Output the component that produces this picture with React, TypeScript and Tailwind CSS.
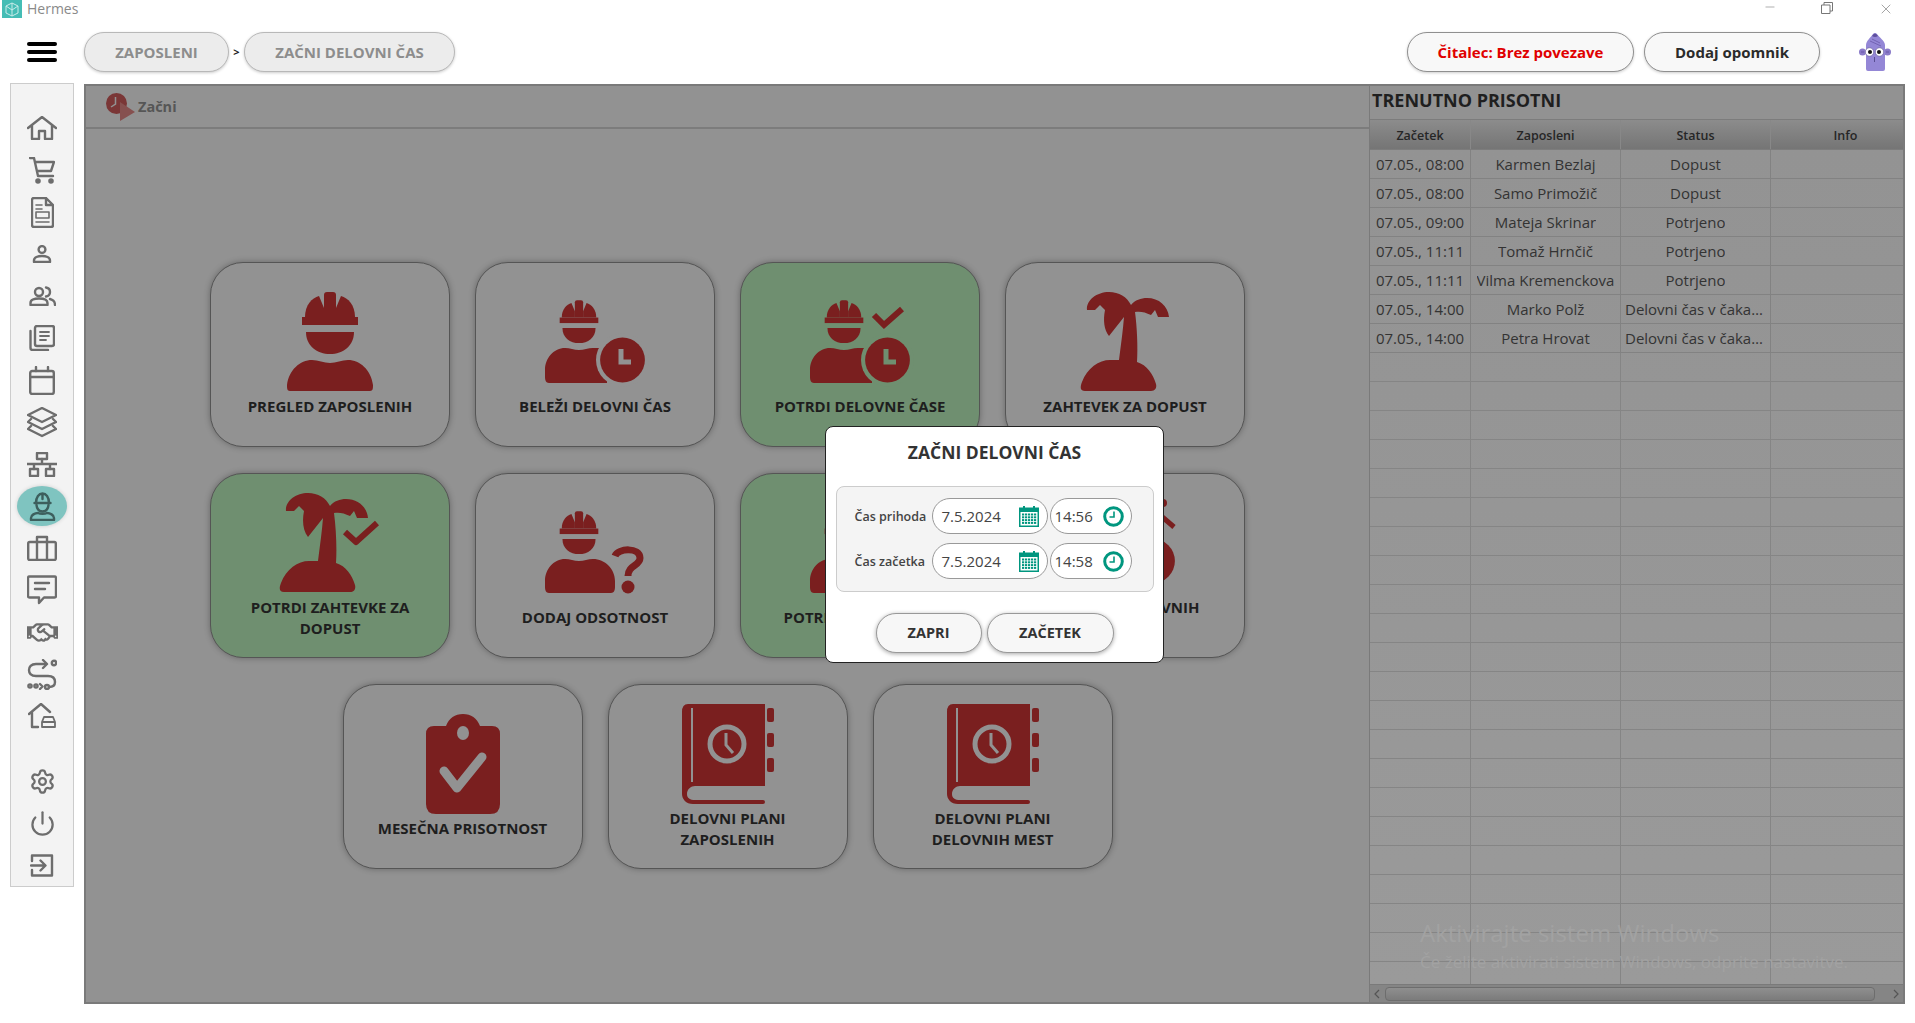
import { Settings, Power, Minus, X } from "lucide-react";
import { FaRegHandshake } from "react-icons/fa";
import type { ReactNode } from "react";

const RED = "#7a1f1f";
const GRAY_BG = "#929292";
const GREEN_BG = "#6f8f70";

// --- card icons ---
const Helmet = () => (
  <g fill={RED}>
    <rect x="22" y="25" width="56" height="8" />
    <path d="M25 25C25 13 32 6 39 4L44 16V25Z" />
    <path d="M44 25V3Q44 0 47 0H53Q56 0 56 3V25Z" />
    <path d="M75 25C75 13 68 6 61 4L56 16V25Z" />
    <path d="M26 40H74C74 54 63 62 50 62C37 62 26 54 26 40Z" />
  </g>
);

const WorkerIcon = () => (
  <svg viewBox="0 0 100 100" className="w-[100px] h-[100px]">
    <Helmet />
    <path fill={RED} d="M10 99C7 99 7 96 7 93C9 78 20 68 32 68C38 68 44 71 50 71C56 71 62 68 68 68C80 68 91 78 93 93C93 96 93 99 90 99Z" />
  </svg>
);

const SmallHead = () => (
  <g transform="translate(9.5 8.3) scale(0.69)">
    <Helmet />
  </g>
);

const ClockBadge = ({ bg }: { bg: string }) => (
  <g>
    <path fill={RED} d="M14 91C11 91 10 88 10 85V78C10 66 19 56 30 56C35 56 39 58 44 58C49 58 53 56 58 56H72V91Z" />
    <circle cx="87.5" cy="68" r="26.5" fill={bg} />
    <circle cx="87.5" cy="68" r="22.4" fill={RED} />
    <path d="M86 57V70H96" fill="none" stroke={bg} strokeWidth="5" />
  </g>
);

const PersonClock = ({ bg, mark }: { bg: string; mark?: "check" | "slash" }) => (
  <svg viewBox="0 0 120 100" className="w-[120px] h-[100px]">
    <SmallHead />
    <ClockBadge bg={bg} />
    {mark === "check" && <polyline points="74,23 84,33 102,17" fill="none" stroke={RED} strokeWidth="6" />}
    {mark === "slash" && (
      <g>
        <path d="M95 22L109 34" stroke={RED} strokeWidth="5" />
        <circle cx="98" cy="10" r="4" fill={RED} />
      </g>
    )}
  </svg>
);

const PersonQuestion = () => (
  <svg viewBox="0 0 120 100" className="w-[120px] h-[100px]">
    <SmallHead />
    <path fill={RED} d="M14 90C11 90 10 87 10 84V78C10 66 19 56 30 56C35 56 39 58 44 58C49 58 53 56 58 56C70 56 80 66 80 78V84C80 87 79 90 76 90Z" />
    <path d="M80 53C83 45 105 44 105 55C105 63 93 62 93 73" fill="none" stroke={RED} strokeWidth="7" />
    <circle cx="93" cy="84" r="6.5" fill={RED} />
  </svg>
);

const PalmPaths = () => (
  <path
    fill={RED}
    d="M12 18C11 8 22 0 34 0C44 0 52 5 56 13C60 8 66 6 72 6C84 6 93 14 94 25H83L80 18L76 23C70 20 65 19 60 20C62 35 63 55 62 70C72 73 78 82 81 92C82 96 80 99 76 99H10C5 99 5 95 7 90C12 76 24 68 35 68H44C46 52 48 38 49 25L34 44C29 38 28 28 30 18L25 13L20 18Z"
  />
);

const PalmIcon = () => (
  <svg viewBox="0 0 100 100" className="w-[100px] h-[100px]">
    <PalmPaths />
  </svg>
);

const PalmCheck = () => (
  <svg viewBox="0 0 120 100" className="w-[120px] h-[100px]">
    <g transform="translate(4 0)">
      <PalmPaths />
    </g>
    <polyline points="75,39 86,49 107,30" fill="none" stroke={RED} strokeWidth="6" strokeLinejoin="round" />
  </svg>
);

const ClipboardIcon = ({ bg }: { bg: string }) => (
  <svg viewBox="0 0 100 100" className="w-[100px] h-[100px]">
    <path fill={RED} d="M21 12H33C36 4 42 0 50 0C58 0 64 4 67 12H79Q87 12 87 20V90Q87 100 77 100H23Q13 100 13 90V20Q13 12 21 12Z" />
    <ellipse cx="50" cy="19" rx="6" ry="7" fill={bg} />
    <polyline points="31,57 44,74 69,43" fill="none" stroke={bg} strokeWidth="9" strokeLinecap="round" strokeLinejoin="round" />
  </svg>
);

const BookIcon = ({ bg }: { bg: string }) => (
  <svg viewBox="0 0 100 100" className="w-[100px] h-[100px]">
    <path fill={RED} d="M10 0H87V82H17C13 82 9 85 9 90C9 94 12 96 17 96H85Q87 96 87 98Q87 100 85 100H15C8 100 4 95 4 90V8Q4 0 10 0Z" />
    <rect x="89" y="4" width="7" height="14" rx="2" fill={RED} />
    <rect x="89" y="29" width="7" height="14" rx="2" fill={RED} />
    <rect x="89" y="54" width="7" height="14" rx="2" fill={RED} />
    <rect x="13" y="4" width="2" height="74" fill={bg} />
    <circle cx="49" cy="40" r="17" fill="none" stroke={bg} strokeWidth="5" />
    <polyline points="48,29 48,41 55,49" fill="none" stroke={bg} strokeWidth="3" />
  </svg>
);

// --- sidebar icons ---
const S = ({ w, h, vb, children }: { w: number; h: number; vb: string; children: ReactNode }) => (
  <svg width={w} height={h} viewBox={vb} fill="none" stroke="currentColor" strokeWidth="2.4" strokeLinejoin="round" strokeLinecap="round">
    {children}
  </svg>
);

const sideIcons: ReactNode[] = [
  <S w={30} h={24} vb="0 0 30 24">
    <path d="M1 12L15 1L29 12M5 9V23H12V15H18V23H25V9" />
  </S>,
  <S w={26} h={27} vb="0 0 26 27">
    <path d="M1 1H5L9 19H24M6 5H25L22 14H8" />
    <circle cx="9" cy="24" r="1.6" fill="currentColor" />
    <circle cx="22" cy="24" r="1.6" fill="currentColor" />
  </S>,
  <S w={23} h={31} vb="0 0 23 31">
    <path d="M3 1H15L22 8V28Q22 30 20 30H3Q1 30 1 28V3Q1 1 3 1ZM15 1V8H22" />
    <path d="M5 8H11M5 12H11M5 25H18" strokeWidth="1.6" />
    <rect x="5" y="15" width="13" height="6" strokeWidth="1.6" />
  </S>,
  <S w={20} h={18} vb="0 0 20 18">
    <circle cx="10" cy="4.5" r="3.4" />
    <path d="M2 17V15.5C2 12.5 6 11 10 11C14 11 18 12.5 18 15.5V17Z" />
  </S>,
  <S w={27} h={20} vb="0 0 27 20">
    <circle cx="10" cy="6" r="4" />
    <path d="M1.5 19V17C1.5 14 5 12.5 10 12.5C15 12.5 18.5 14 18.5 17V19Z" />
    <path d="M17 1.5C20 2 21 4 21 6C21 8 20 10 17 10.5M21 13C24 14 26 15 26 19" />
  </S>,
  <S w={26} h={26} vb="0 0 26 26">
    <rect x="6" y="1" width="19" height="20" rx="2" />
    <path d="M1.5 6V23Q1.5 25 3.5 25H19" />
    <path d="M11 7H20M11 11H20M11 15H17" strokeWidth="1.8" />
  </S>,
  <S w={26} h={29} vb="0 0 26 29">
    <rect x="1.2" y="5" width="23.6" height="23" rx="2" />
    <path d="M1.2 11H24.8M7 1V5M19 1V5" />
  </S>,
  <S w={30} h={31} vb="0 0 30 31">
    <path d="M15 1L29 8L15 15L1 8Z" />
    <path d="M4 12L1 15L15 22L29 15L26 12M4 19L1 22L15 29L29 22L26 19" />
  </S>,
  <S w={30} h={25} vb="0 0 30 25">
    <rect x="10" y="1" width="10" height="6" />
    <rect x="3" y="17" width="8" height="7" />
    <rect x="19" y="17" width="8" height="7" />
    <path d="M15 7V12M0 12H30M7 12V17M23 12V17" />
  </S>,
  <S w={27} h={29} vb="0 0 27 29">
    <path d="M7 11C7 5 10 1.5 13.500 1.500C17 1.500 20 5 20 11M5.500 11H21.500M13.500 1.500V7" />
    <path d="M7.500 13C8 17 10 19.500 13.500 19.500C17 19.500 19 17 19.500 13" />
    <path d="M2 28V26C2 23 6 21 9 21C11 22 16 22 18 21C21 21 25 23 25 26V28Z" />
  </S>,
  <S w={30} h={26} vb="0 0 30 26">
    <rect x="1.2" y="7" width="27.6" height="18" rx="1.5" />
    <path d="M10 7V2H20V7M10 7V25M20 7V25" />
  </S>,
  <S w={30} h={30} vb="0 0 30 30">
    <path d="M2.500 1.500H27.500Q29 1.500 29 3V21Q29 22.500 27.500 22.500H17L12 28V22.500H2.500Q1 22.500 1 21V3Q1 1.500 2.500 1.500Z" />
    <path d="M8 8H22M8 14H18" />
  </S>,
  <FaRegHandshake size={31} />,
  <S w={30} h={31} vb="0 0 30 31">
    <path d="M19 5H9C4 5 2 8 2 11C2 15 5 17 9 17H21C25 17 28 19 28 23C28 26 26 28 22 28" />
    <path d="M16 1L20 5L16 9" />
    <circle cx="27" cy="4" r="2.200" />
    <circle cx="3" cy="27" r="1.600" />
    <circle cx="9" cy="27" r="1.600" />
    <path d="M13 25L15.500 27.500L13 30" />
    <circle cx="20" cy="28" r="2" />
  </S>,
  <S w={29} h={26} vb="0 0 29 26">
    <path d="M1 11L13 1L22 9M4 9V24H10" />
    <path d="M14 24V19L16 14H25L27 19V24H14ZM14 19H27" strokeWidth="1.800" />
  </S>,
];

const bottomIcons: ReactNode[] = [
  <Settings size={27} strokeWidth={2} />,
  <Power size={27} strokeWidth={2} />,
  <S w={24} h={23} vb="0 0 24 23">
    <path d="M2 7V1.500H22V21.500H2V16" />
    <path d="M1 11.500H15M10.500 6.500L15.500 11.500L10.500 16.500" />
  </S>,
];

// --- small pieces ---
const Pill = ({ className, children }: { className: string; children: ReactNode }) => (
  <div className={`h-10 rounded-[20px] border-[1.5px] flex items-center justify-center font-bold shadow-[0_1px_3px_rgba(0,0,0,0.2)] ${className}`}>
    {children}
  </div>
);

const CalendarIcon = () => (
  <svg width="20" height="21" viewBox="0 0 20 21" className="text-[#00967f]">
    <path fill="currentColor" d="M0 1.500H20V21H0Z" />
    <rect x="4" y="0" width="2" height="3" fill="currentColor" />
    <rect x="14" y="0" width="2" height="3" fill="currentColor" />
    <rect x="1.500" y="6" width="17" height="13.500" fill="#fff" />
    {[0, 1, 2, 3].map((r) =>
      [0, 1, 2, 3, 4].map((c) => (
        <rect key={`${r}-${c}`} x={3 + c * 3} y={7.500 + r * 2.800} width="2.200" height="2" fill="currentColor" />
      ))
    )}
  </svg>
);

const TimeIcon = () => (
  <svg width="21" height="21" viewBox="0 0 21 21">
    <circle cx="10.500" cy="10.500" r="8.800" fill="none" stroke="#00967f" strokeWidth="3" />
    <path d="M11 5.500V11H6.500" fill="none" stroke="#00967f" strokeWidth="1.600" />
  </svg>
);

const TimeRow = ({ label, date, time }: { label: string; date: string; time: string }) => (
  <div className="flex items-center h-9">
    <div className="w-[77px] pt-[2px] text-[12.500px] font-semibold text-[#444] whitespace-nowrap">{label}</div>
    <div className="w-[116px] h-9 rounded-[18px] border border-[#999] bg-white flex items-center justify-between pl-[9px] pr-[8px] text-[15px] text-[#444]">
      <span>{date}</span>
      <CalendarIcon />
    </div>
    <div className="w-[82px] h-9 ml-[2px] rounded-[18px] border border-[#999] bg-white flex items-center justify-between pl-[4px] pr-[7px] text-[15px] text-[#444]">
      <span>{time}</span>
      <TimeIcon />
    </div>
  </div>
);

type CardItem = { label: string; green?: boolean; icon: (bg: string) => ReactNode };

const row1: CardItem[] = [
  { label: "PREGLED ZAPOSLENIH", icon: () => <WorkerIcon /> },
  { label: "BELEŽI DELOVNI ČAS", icon: (bg) => <PersonClock bg={bg} /> },
  { label: "POTRDI DELOVNE ČASE", green: true, icon: (bg) => <PersonClock bg={bg} mark="check" /> },
  { label: "ZAHTEVEK ZA DOPUST", icon: () => <PalmIcon /> },
];
const row2: CardItem[] = [
  { label: "POTRDI ZAHTEVKE ZA\nDOPUST", green: true, icon: () => <PalmCheck /> },
  { label: "DODAJ ODSOTNOST", icon: () => <PersonQuestion /> },
  { label: "POTRDI ODSOTNOST", green: true, icon: () => <PersonQuestion /> },
  { label: "PREGLED DELOVNIH\nČASOV", icon: (bg) => <PersonClock bg={bg} mark="slash" /> },
];
const row3: CardItem[] = [
  { label: "MESEČNA PRISOTNOST", icon: (bg) => <ClipboardIcon bg={bg} /> },
  { label: "DELOVNI PLANI\nZAPOSLENIH", icon: (bg) => <BookIcon bg={bg} /> },
  { label: "DELOVNI PLANI\nDELOVNIH MEST", icon: (bg) => <BookIcon bg={bg} /> },
];

const Card = ({ item }: { item: CardItem }) => {
  const bg = item.green ? GREEN_BG : GRAY_BG;
  return (
    <div
      className={`w-[240px] h-[185px] rounded-[33px] border border-[#555] shadow-[0_0_6px_rgba(0,0,0,0.3)] flex flex-col items-center justify-center ${
        item.green ? "bg-[#6f8f70]" : "bg-[#929292]"
      }`}
    >
      <div className="h-[100px] flex items-center justify-center">{item.icon(bg)}</div>
      <div className="mt-1 text-[15px] leading-[21px] font-bold text-[#1e1e1e] text-center whitespace-pre-line">{item.label}</div>
    </div>
  );
};

const rows = [
  ["07.05., 08:00", "Karmen Bezlaj", "Dopust"],
  ["07.05., 08:00", "Samo Primožič", "Dopust"],
  ["07.05., 09:00", "Mateja Skrinar", "Potrjeno"],
  ["07.05., 11:11", "Tomaž Hrnčič", "Potrjeno"],
  ["07.05., 11:11", "Vilma Kremenckova", "Potrjeno"],
  ["07.05., 14:00", "Marko Polž", "Delovni čas v čakanju"],
  ["07.05., 14:00", "Petra Hrovat", "Delovni čas v čakanju"],
];
const emptyRows = Array.from({ length: 23 }, (_, i) => i);

const colClass = ["w-[101px]", "w-[150px]", "w-[150px]", "w-[150px]"];

export default function App() {
  return (
    <div className="w-[1915px] h-[1023px] bg-white overflow-hidden flex flex-col font-['Open_Sans',sans-serif] relative">
      {/* title bar */}
      <div className="h-5 flex items-start">
        <div className="ml-[2px] w-5 h-[18px] bg-[#45bdb5] flex items-center justify-center">
          <svg width="14" height="15" viewBox="0 0 14 15" fill="none" stroke="#c9ecea" strokeWidth="1">
            <path d="M7 1L13 4V11L7 14L1 11V4ZM7 1V14M1 4L7 8L13 4" />
          </svg>
        </div>
        <span className="ml-[5px] text-[14px] leading-[17px] text-[#8a8a8a]">Hermes</span>
        <div className="ml-auto mr-[21px] flex items-start text-[#777]">
          <Minus size={14} strokeWidth={1} className="mt-0" />
          <svg width="12" height="12" viewBox="0 0 12 12" fill="none" stroke="currentColor" strokeWidth="1" className="ml-[44px] mt-[2px]">
            <path d="M.5 3H9V11.500H.5ZM3 3V.5H11.500V9H9" />
          </svg>
          <X size={16} strokeWidth={1} className="ml-[45px] mt-[1px]" />
        </div>
      </div>

      {/* header */}
      <div className="h-[64px] flex items-center">
        <div className="w-[84px] pl-[27px] flex flex-col gap-1">
          <div className="w-[30px] h-1 rounded-sm bg-black" />
          <div className="w-[30px] h-1 rounded-sm bg-black" />
          <div className="w-[30px] h-1 rounded-sm bg-black" />
        </div>
        <Pill className="w-[145px] bg-[#ececec] border-[#b8b8b8] text-[#8d8d8d] text-[15px]">ZAPOSLENI</Pill>
        <span className="w-[15px] text-center text-[11px] font-bold text-[#222]">&gt;</span>
        <Pill className="w-[211px] bg-[#ececec] border-[#b8b8b8] text-[#8d8d8d] text-[15px]">ZAČNI DELOVNI ČAS</Pill>
        <div className="ml-auto flex items-center pr-6">
          <Pill className="w-[227px] bg-[#f8f8f8] border-[#8f8f8f] text-[#e00000] text-[15px]">Čitalec: Brez povezave</Pill>
          <Pill className="w-[176px] ml-[10px] bg-[#f8f8f8] border-[#8f8f8f] text-[#2b2b2b] text-[15px]">Dodaj opomnik</Pill>
          <svg width="32" height="40" viewBox="0 0 32 40" className="ml-[39px]">
            <circle cx="3.500" cy="20" r="3.500" fill="#8a7ac8" />
            <circle cx="28.500" cy="20" r="3.500" fill="#8a7ac8" />
            <path d="M2 20H5M27 20H30" stroke="#5f4fa0" strokeWidth="0.8" />
            <path d="M7 13C7 9 12 5 14 2Q16 0 18 2C20 5 26 9 26 13V37Q26 39 24 39H9Q7 39 7 37Z" fill="#9487d6" />
            <path d="M13 4Q16 -1 19 4Q16 6 13 4Z" fill="#5e4f9e" />
            <circle cx="10.500" cy="20" r="4.200" fill="#fff" stroke="#4a4080" strokeWidth="0.5" />
            <circle cx="20.500" cy="20" r="4.200" fill="#fff" stroke="#4a4080" strokeWidth="0.5" />
            <circle cx="11" cy="20" r="2" fill="#111" />
            <circle cx="20" cy="20" r="2" fill="#111" />
            <path d="M11 9L22 14M13 7L21 11" stroke="#6a5aa8" strokeWidth="0.8" />
            <path d="M15.500 25V30" stroke="#4a4080" strokeWidth="0.8" />
          </svg>
        </div>
      </div>

      {/* body */}
      <div className="flex items-start pl-[10px]">
        <aside className="w-[64px] h-[804px] -mt-px border border-[#ccc] bg-[#f3f3f3] flex flex-col items-center pt-[23px] text-[#6d6d6d]">
          {sideIcons.map((icon, i) => (
            <div key={i} className="h-[42px] w-[50px] shrink-0 flex items-center justify-center">
              <div className={`h-10 w-[50px] flex items-center justify-center ${i === 9 ? "bg-[#7fc4c0] rounded-[50%] text-[#3d5f5d] shadow-[0_0_4px_rgba(0,0,0,0.15)]" : ""}`}>
                {icon}
              </div>
            </div>
          ))}
          <div className="h-[23px] shrink-0" />
          {bottomIcons.map((icon, i) => (
            <div key={i} className="h-[42px] w-[50px] shrink-0 flex items-center justify-center">
              {icon}
            </div>
          ))}
        </aside>

        {/* main dimmed area */}
        <main className="relative ml-[10px] w-[1821px] h-[920px] bg-[#929292] border-2 border-[#7a7a7a] flex">
          <section className="w-[1284px] flex flex-col border-r border-[#7a7a7a]">
            <div className="h-[43px] border-b-2 border-[#7c7c7c] flex items-center pl-5 shrink-0">
              <svg width="30" height="28" viewBox="0 0 30 28">
                <circle cx="10.500" cy="10.500" r="10.500" fill="#7a3636" />
                <path d="M14 9L29 19L14 28Z" fill="#86504f" />
                <path d="M9.500 4V11L5 14" fill="none" stroke="#929292" strokeWidth="1.500" />
              </svg>
              <span className="ml-[2px] text-[14.500px] font-bold text-[#565656]">Začni</span>
            </div>
            <div className="flex-1 flex flex-col items-center justify-center gap-[26px]">
              {[row1, row2, row3].map((row, i) => (
                <div key={i} className="flex gap-[25px]">
                  {row.map((item) => (
                    <Card key={item.label} item={item} />
                  ))}
                </div>
              ))}
            </div>
          </section>

          <section className="flex-1 min-w-0 flex flex-col overflow-hidden">
            <div className="h-[34px] pl-[2px] pb-[5px] flex items-center text-[18px] font-bold text-[#1f1f1f] border-b border-[#7c7c7c] shrink-0">
              TRENUTNO PRISOTNI
            </div>
            <div className="h-[30px] flex shrink-0 bg-gradient-to-b from-[#8c8c8c] to-[#757575] border-b border-[#7c7c7c]">
              {["Začetek", "Zaposleni", "Status", "Info"].map((h, i) => (
                <div key={h} className={`${colClass[i]} shrink-0 border-r border-[#888] pt-[3px] flex items-center justify-center text-[12.500px] font-semibold text-[#262626]`}>
                  {h}
                </div>
              ))}
            </div>
            <div className="flex-1 min-h-0 overflow-hidden bg-gradient-to-b from-[#939393] to-[#9a9a9a]">
              {rows.map((r) => (
                <div key={r[0] + r[1]} className="h-[29px] flex border-b border-[#828282] text-[15px] text-[#333]">
                  {r.map((c, i) => (
                    <div key={i} className={`${colClass[i]} shrink-0 border-r border-[#828282] px-[4px] flex items-center justify-center`}>
                      <span className="truncate">{c}</span>
                    </div>
                  ))}
                </div>
              ))}
              {emptyRows.map((i) => (
                <div key={i} className="h-[29px] flex border-b border-[#858585]">
                  {colClass.slice(0, 3).map((c, j) => (
                    <div key={j} className={`${c} shrink-0 border-r border-[#858585]`} />
                  ))}
                </div>
              ))}
            </div>
            <div className="h-[18px] shrink-0 bg-[#858585] flex items-center text-[#555] border-t border-[#7a7a7a]">
              <svg width="12" height="12" viewBox="0 0 12 12" fill="none" stroke="currentColor" strokeWidth="1.200" className="ml-[1px]">
                <path d="M8 2L4 6L8 10" />
              </svg>
              <div className="ml-[2px] w-[490px] h-[14px] rounded-sm border border-[#6d6d6d] bg-gradient-to-b from-[#8f8f8f] to-[#7b7b7b]" />
              <svg width="12" height="12" viewBox="0 0 12 12" fill="none" stroke="currentColor" strokeWidth="1.200" className="ml-auto mr-[1px]">
                <path d="M4 2L8 6L4 10" />
              </svg>
            </div>
          </section>

          {/* windows activation watermark */}
          <div className="absolute left-[1334px] top-[830px] text-[#a2a2a2] pointer-events-none whitespace-nowrap">
            <div className="text-[24px] leading-[34px]">Aktivirajte sistem Windows</div>
            <div className="text-[17px] leading-[24px]">Če želite aktivirati sistem Windows, odprite nastavitve.</div>
          </div>

          {/* dialog */}
          <div className="absolute inset-0 flex items-center justify-center">
            <div className="w-[339px] h-[237px] bg-white border border-[#222] rounded-lg flex flex-col items-center">
              <div className="mt-[11px] text-[17.500px] leading-[28px] font-bold text-[#333]">ZAČNI DELOVNI ČAS</div>
              <div className="mt-[20px] w-[318px] h-[106px] rounded-lg border border-[#ccc] bg-[#f4f4f4] flex flex-col items-end justify-center gap-[9px] pr-[21px]">
                <TimeRow label="Čas prihoda" date="7.5.2024" time="14:56" />
                <TimeRow label="Čas začetka" date="7.5.2024" time="14:58" />
              </div>
              <div className="mt-[21px] flex gap-[5px]">
                <button className="w-[106px] h-10 rounded-[20px] border border-[#999] bg-[#f7f7f7] shadow-[0_1px_4px_rgba(0,0,0,0.35)] text-[14.500px] font-bold text-[#333]">ZAPRI</button>
                <button className="w-[127px] h-10 rounded-[20px] border border-[#999] bg-[#f7f7f7] shadow-[0_1px_4px_rgba(0,0,0,0.35)] text-[14.500px] font-bold text-[#333]">ZAČETEK</button>
              </div>
            </div>
          </div>
        </main>
      </div>
    </div>
  );
}
